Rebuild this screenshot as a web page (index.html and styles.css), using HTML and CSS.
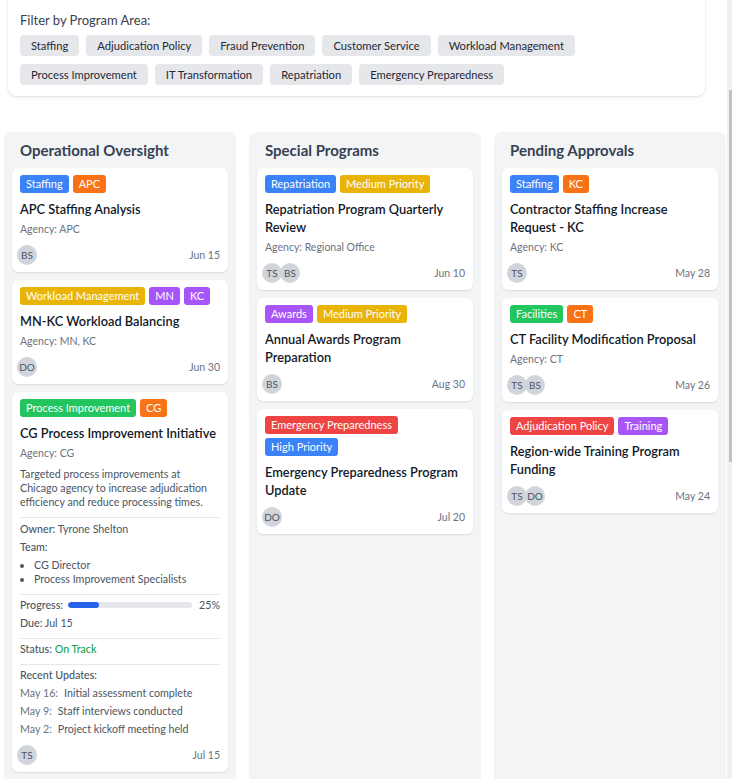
FILE: index.html
```html
<!DOCTYPE html>
<html lang="en">
<head>
<meta charset="utf-8">
<title>Program Board</title>
<link rel="stylesheet" href="styles.css">
</head>
<body>
<div class="page">
  <section class="filters">
    <div class="filters-label">Filter by Program Area:</div>
    <div class="filter-list">
      <button class="filter-btn">Staffing</button>
      <button class="filter-btn">Adjudication Policy</button>
      <button class="filter-btn">Fraud Prevention</button>
      <button class="filter-btn">Customer Service</button>
      <button class="filter-btn">Workload Management</button>
      <button class="filter-btn">Process Improvement</button>
      <button class="filter-btn">IT Transformation</button>
      <button class="filter-btn">Repatriation</button>
      <button class="filter-btn">Emergency Preparedness</button>
    </div>
  </section>

  <div class="board">
    <div class="column">
      <h2 class="column-title">Operational Oversight</h2>
      <article class="card">
        <div class="tags"><span class="tag tag-blue">Staffing</span><span class="tag tag-orange">APC</span></div>
        <h3 class="card-title">APC Staffing Analysis</h3>
        <div class="agency">Agency: APC</div>
        <div class="card-footer"><div class="avatars"><span class="avatar">BS</span></div><span class="date">Jun 15</span></div>
      </article>
      <article class="card">
        <div class="tags"><span class="tag tag-yellow">Workload Management</span><span class="tag tag-purple">MN</span><span class="tag tag-purple">KC</span></div>
        <h3 class="card-title">MN-KC Workload Balancing</h3>
        <div class="agency">Agency: MN, KC</div>
        <div class="card-footer"><div class="avatars"><span class="avatar">DO</span></div><span class="date">Jun 30</span></div>
      </article>
      <article class="card">
        <div class="tags"><span class="tag tag-green">Process Improvement</span><span class="tag tag-orange">CG</span></div>
        <h3 class="card-title">CG Process Improvement Initiative</h3>
        <div class="agency">Agency: CG</div>
        <p class="desc">Targeted process improvements at Chicago agency to increase adjudication efficiency and reduce processing times.</p>
        <div class="detail-section">
          <div class="detail-row"><span class="detail-key">Owner:</span> Tyrone Shelton</div>
          <div class="detail-row"><span class="detail-key">Team:</span></div>
          <ul class="team-list">
            <li>CG Director</li>
            <li>Process Improvement Specialists</li>
          </ul>
        </div>
        <div class="detail-section">
          <div class="progress-row">
            <span class="detail-key">Progress:</span>
            <div class="progress-bar"><div class="progress-fill" style="width:25%"></div></div>
            <span class="progress-pct">25%</span>
          </div>
          <div class="detail-row"><span class="detail-key">Due:</span> Jul 15</div>
        </div>
        <div class="detail-section">
          <div class="detail-row"><span class="detail-key">Status:</span> <span class="status-ok">On Track</span></div>
        </div>
        <div class="detail-section">
          <div class="detail-row"><span class="detail-key">Recent Updates:</span></div>
          <div class="update"><span class="update-date">May 16:</span>Initial assessment complete</div>
          <div class="update"><span class="update-date">May 9:</span>Staff interviews conducted</div>
          <div class="update"><span class="update-date">May 2:</span>Project kickoff meeting held</div>
        </div>
        <div class="card-footer card-footer-wide"><div class="avatars"><span class="avatar">TS</span></div><span class="date">Jul 15</span></div>
      </article>
    </div>

    <div class="column">
      <h2 class="column-title">Special Programs</h2>
      <article class="card">
        <div class="tags"><span class="tag tag-blue">Repatriation</span><span class="tag tag-yellow">Medium Priority</span></div>
        <h3 class="card-title">Repatriation Program Quarterly Review</h3>
        <div class="agency">Agency: Regional Office</div>
        <div class="card-footer"><div class="avatars"><span class="avatar">TS</span><span class="avatar">BS</span></div><span class="date">Jun 10</span></div>
      </article>
      <article class="card">
        <div class="tags"><span class="tag tag-purple">Awards</span><span class="tag tag-yellow">Medium Priority</span></div>
        <h3 class="card-title">Annual Awards Program Preparation</h3>
        <div class="card-footer"><div class="avatars"><span class="avatar">BS</span></div><span class="date">Aug 30</span></div>
      </article>
      <article class="card">
        <div class="tags"><span class="tag tag-red">Emergency Preparedness</span><span class="tag tag-blue">High Priority</span></div>
        <h3 class="card-title">Emergency Preparedness Program Update</h3>
        <div class="card-footer"><div class="avatars"><span class="avatar">DO</span></div><span class="date">Jul 20</span></div>
      </article>
    </div>

    <div class="column">
      <h2 class="column-title">Pending Approvals</h2>
      <article class="card">
        <div class="tags"><span class="tag tag-blue">Staffing</span><span class="tag tag-orange">KC</span></div>
        <h3 class="card-title">Contractor Staffing Increase Request - KC</h3>
        <div class="agency">Agency: KC</div>
        <div class="card-footer"><div class="avatars"><span class="avatar">TS</span></div><span class="date">May 28</span></div>
      </article>
      <article class="card">
        <div class="tags"><span class="tag tag-green">Facilities</span><span class="tag tag-orange">CT</span></div>
        <h3 class="card-title">CT Facility Modification Proposal</h3>
        <div class="agency">Agency: CT</div>
        <div class="card-footer"><div class="avatars"><span class="avatar">TS</span><span class="avatar">BS</span></div><span class="date">May 26</span></div>
      </article>
      <article class="card">
        <div class="tags"><span class="tag tag-red">Adjudication Policy</span><span class="tag tag-purple">Training</span></div>
        <h3 class="card-title">Region-wide Training Program Funding</h3>
        <div class="card-footer"><div class="avatars"><span class="avatar">TS</span><span class="avatar">DO</span></div><span class="date">May 24</span></div>
      </article>
    </div>
  </div>
</div>
<div class="scrollbar"><div class="scrollbar-thumb"></div></div>
</body>
</html>
```

FILE: styles.css
```css
* { box-sizing: border-box; }

html, body {
  margin: 0;
  height: 100%;
  overflow: hidden;
}

body {
  font-family: Lato, Roboto, "Liberation Sans", sans-serif;
  background: #ffffff;
  color: #1f2937;
}

.page {
  margin-top: -30px;
}

/* Filter panel */
.filters {
  margin-left: 8px;
  width: 697px;
  background: #ffffff;
  border-radius: 8px;
  box-shadow: 0 1px 3px rgba(0, 0, 0, 0.1), 0 1px 2px rgba(0, 0, 0, 0.05);
  padding: 40px 12px 11px;
}

.filters-label {
  font-size: 13px;
  line-height: 20px;
  color: #374151;
  margin-bottom: 5px;
}

.filter-list {
  display: flex;
  flex-wrap: wrap;
  gap: 8px 7px;
}

.filter-btn {
  font-family: inherit;
  font-size: 11.2px;
  line-height: 17px;
  padding: 2px 11px;
  background: #e5e7eb;
  color: #1f2937;
  border: 0;
  border-radius: 4px;
}

/* Board */
.board {
  display: flex;
  gap: 13px;
  margin-top: 36px;
  padding-left: 4px;
  align-items: stretch;
}

.column {
  flex: 0 0 232px;
  background: #f3f4f6;
  border-radius: 8px;
  padding: 8px;
}

.column-title {
  margin: 0 0 8px;
  padding: 0 8px;
  font-size: 15px;
  font-weight: 700;
  line-height: 20px;
  color: #374151;
}

.card {
  background: #ffffff;
  border-radius: 6px;
  box-shadow: 0 1px 2px rgba(0, 0, 0, 0.1);
  padding: 7px 8px 7px;
  margin-bottom: 8px;
}

.tags {
  display: flex;
  flex-wrap: wrap;
  gap: 4px;
  margin-bottom: 7px;
}

.tag {
  font-size: 11px;
  line-height: 18px;
  padding: 0 6px;
  border-radius: 3px;
  color: #ffffff;
}

.tag-blue { background: #3b82f6; }
.tag-orange { background: #f97316; }
.tag-yellow { background: #eab308; }
.tag-purple { background: #a855f7; }
.tag-green { background: #22c55e; }
.tag-red { background: #ef4444; }

.card-title {
  margin: 0;
  font-size: 12.8px;
  font-weight: 600;
  line-height: 18px;
  color: #111827;
}

.agency {
  margin-top: 3px;
  font-size: 10.5px;
  line-height: 16px;
  color: #6b7280;
}

.card-footer {
  display: flex;
  justify-content: space-between;
  align-items: center;
  margin-top: 8px;
}

.card-footer-wide {
  margin-top: 9px;
}

.avatars {
  display: flex;
  margin-left: -3px;
}

.avatar {
  width: 20px;
  height: 20px;
  border-radius: 50%;
  background: #d1d5db;
  color: #4b5563;
  font-size: 10px;
  display: flex;
  align-items: center;
  justify-content: center;
}

.avatar + .avatar {
  margin-left: -2px;
}

.date {
  font-size: 10.5px;
  color: #6b7280;
}

/* Expanded details */
.desc {
  margin: 6px 0 0;
  font-size: 10.7px;
  line-height: 14px;
  color: #4b5563;
}

.detail-section {
  margin-top: 8px;
  border-top: 1px solid #e5e7eb;
  padding-top: 3px;
  font-size: 10.7px;
  line-height: 14px;
  color: #4b5563;
}

.desc + .detail-section {
  padding-top: 4px;
}

.detail-row + .detail-row,
.progress-row + .detail-row,
.detail-row + .update,
.update + .update {
  margin-top: 4px;
}

.detail-key {
  font-weight: 500;
}

.team-list {
  margin: 4px 0 0;
  padding-left: 14px;
}

.progress-row {
  display: flex;
  align-items: center;
  gap: 5px;
  height: 14px;
}

.progress-bar {
  flex: 1;
  height: 6px;
  background: #e5e7eb;
  border-radius: 3px;
  overflow: hidden;
}

.progress-fill {
  height: 100%;
  background: #2563eb;
  border-radius: 3px;
}

.progress-pct {
  margin-left: 2px;
}

.status-ok {
  color: #16a34a;
  font-weight: 500;
}

.update-date {
  color: #6b7280;
  margin-right: 6px;
}

/* Scrollbar overlay */
.scrollbar {
  position: fixed;
  top: 0;
  right: 0;
  width: 5px;
  height: 100%;
  background: #f1f1f1;
}

.scrollbar-thumb {
  position: absolute;
  top: 90px;
  right: 0;
  width: 3px;
  height: 372px;
  background: #c1c1c1;
}
```
